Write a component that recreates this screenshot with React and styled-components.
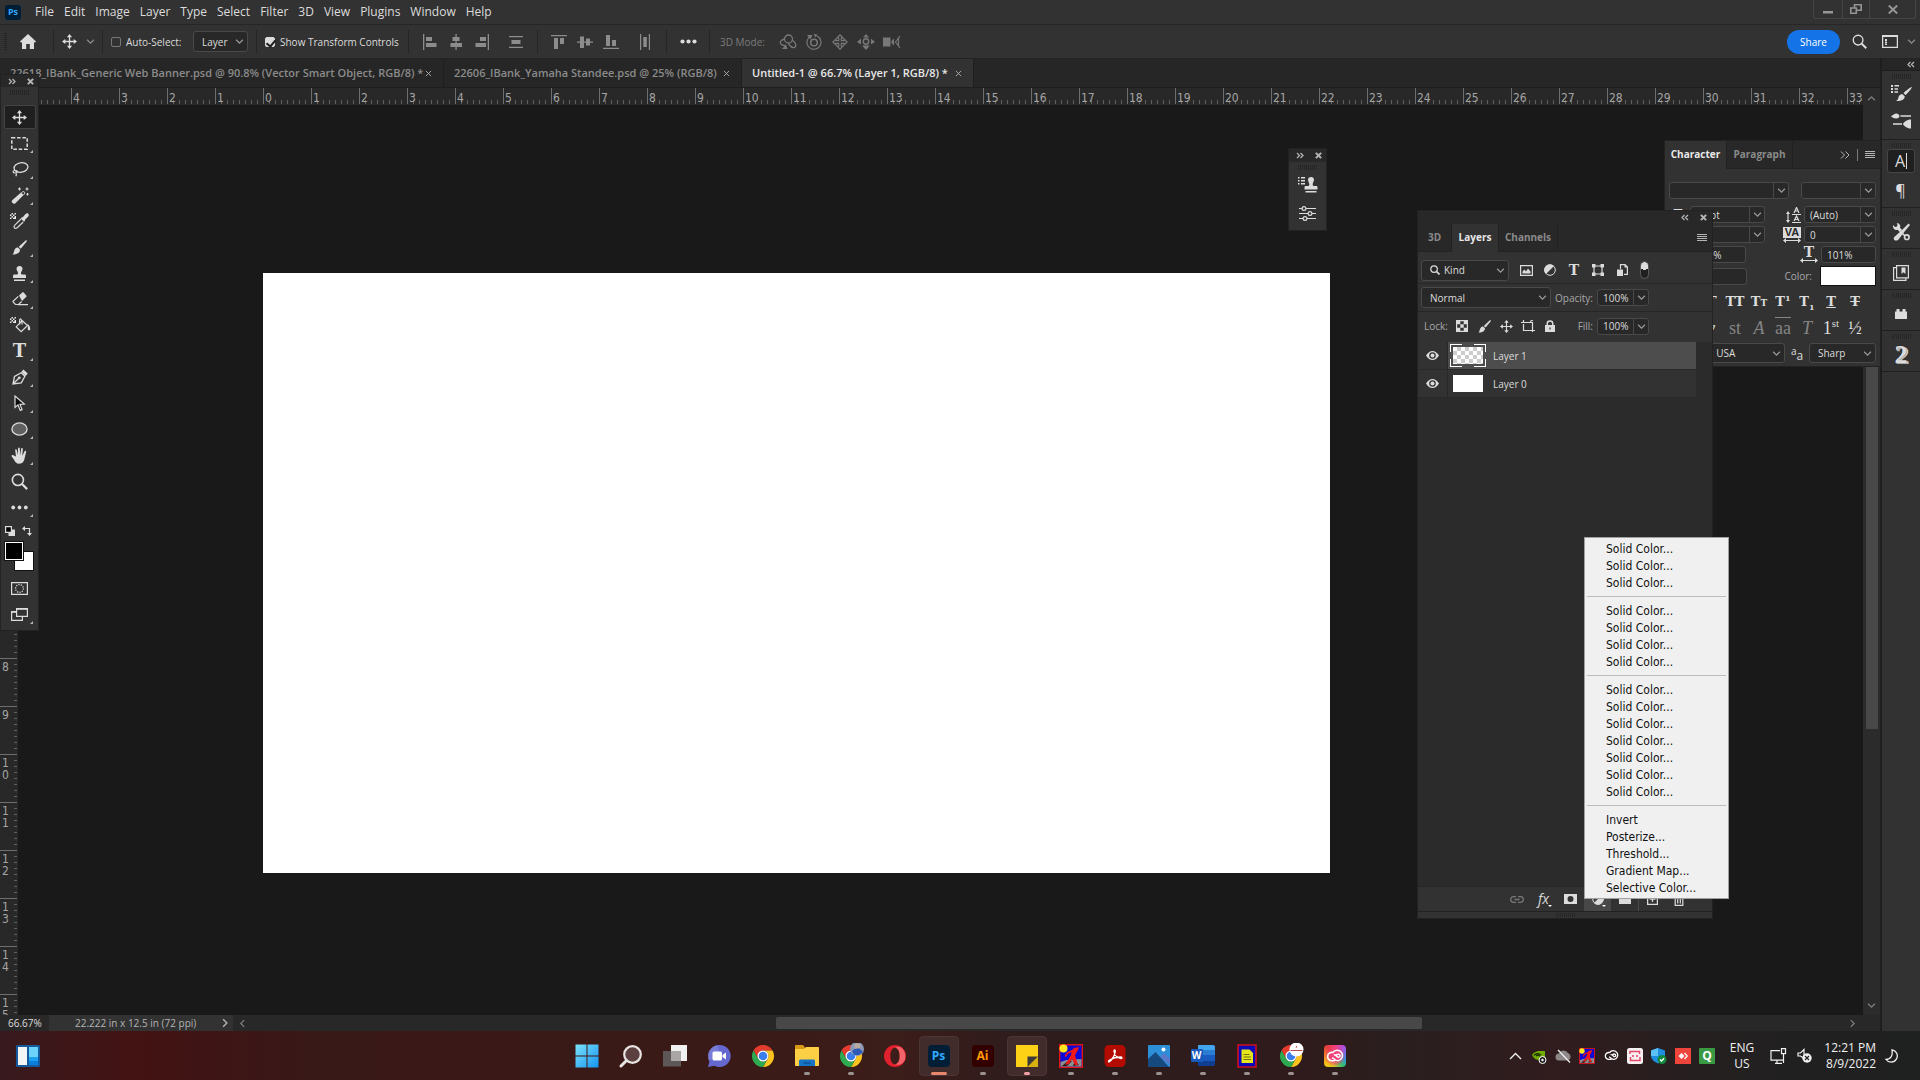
import React, { memo } from 'react'
import styled, { createGlobalStyle, css } from 'styled-components'

/* ---------- styles ---------- */

const GlobalStyle = createGlobalStyle`
  * { box-sizing: border-box; }
  body {
    margin: 0;
    background: #191919;
    color: #dcdcdc;
    font: 10px/14px 'Open Sans', 'Noto Sans', sans-serif;
    overflow: hidden;
  }
  button, input, select {
    margin: 0;
    padding: 0;
    border: 0;
    background: none;
    color: inherit;
    font: inherit;
    border-radius: 0;
  }
  svg { display: block; flex: none; }
`

const center = css`
  display: flex;
  align-items: center;
  justify-content: center;
`

const panel = css`
  position: absolute;
  display: flex;
  flex-direction: column;
  border: 1px solid #222;
  background: #323232;
`

const Page = styled.div`
  display: flex;
  flex-direction: column;
  height: 100vh;
`

const Spacer = styled.div`
  flex: 1;
`

const Gap = styled.div`
  flex: none;
  width: ${p => p.$w}px;
`

const IconButton = styled.button`
  ${center}
  color: #b4b4b4;
`

const Glyph = styled.span`
  font: bold ${p => p.$size}px/1 'DejaVu Serif', serif;
`

const MenuBarWrapper = styled.header`
  display: flex;
  align-items: center;
  height: 25px;
  padding: 0 4px 0 5px;
  background: #323232;
  border-bottom: 1px solid #262626;
  nav {
    display: flex;
    margin-left: 9px;
  }
`

const PsMark = styled.div`
  ${center}
  width: 16px;
  height: 15px;
  border-radius: 3px;
  background: #001e36;
  color: #31a8ff;
  font-size: 9px;
  font-weight: 700;
`

const MenuButton = styled.button`
  padding: 0 5px;
  font-size: 12px;
  line-height: 24px;
`

const WindowButtons = styled.div`
  display: flex;
  align-self: flex-start;
  height: 19px;
  margin-left: auto;
  border: 1px solid #454545;
  border-top: 0;
  border-radius: 0 0 3px 3px;
`

const WindowButton = styled.button`
  ${center}
  width: ${p => p.$w}px;
  color: #959595;
  & + & {
    border-left: 1px solid #454545;
  }
`

const OptionsWrapper = styled.div`
  display: flex;
  align-items: center;
  height: 34px;
  background: #323232;
  border-bottom: 1px solid #232323;
`

const SideGrip = styled.div`
  width: 3px;
  height: 18px;
  margin-left: 4px;
  background: repeating-linear-gradient(#242424 0 1px, transparent 1px 2px);
`

const Divider = styled.div`
  width: 1px;
  height: 24px;
  margin-left: ${p => p.$left || 0}px;
  background: #262626;
`

const OptButton = styled.button`
  ${center}
  flex: none;
  width: ${p => p.$w}px;
  height: 24px;
  color: ${p => (p.$bright ? '#dcdcdc' : p.$dim ? '#787878' : '#8c8c8c')};
`

const Check = styled.label`
  display: flex;
  align-items: center;
  gap: 5px;
  width: ${p => p.$w}px;
  padding-left: 8px;
  white-space: nowrap;
  input {
    appearance: none;
    width: 10px;
    height: 10px;
    border: 1px solid #777;
    border-radius: 2px;
  }
  input:checked {
    border-color: #dcdcdc;
    background: #dcdcdc;
  }
  input:checked::after {
    content: '';
    display: block;
    width: 4px;
    height: 7px;
    margin-left: 2px;
    border: solid #222;
    border-width: 0 2px 2px 0;
    transform: rotate(40deg);
  }
`

const Field = styled.div`
  display: flex;
  align-items: center;
  flex: none;
  width: ${p => p.$w}px;
  height: ${p => p.$h}px;
  border: 1px solid #494949;
  border-radius: 3px;
  background: #282828;
  select {
    appearance: none;
    flex: 1;
    min-width: 0;
    height: 100%;
    padding-left: 8px;
    outline: 0;
  }
  input {
    flex: 1;
    min-width: 0;
    height: 100%;
    padding-left: 5px;
    outline: 0;
  }
`

const Arrow = styled.span`
  ${center}
  flex: none;
  width: 15px;
  height: 100%;
  color: #9a9a9a;
  border-left: ${p => (p.$split ? '1px solid #494949' : 0)};
`

const KindIcon = styled.span`
  padding-left: 8px;
  & + select {
    padding-left: 4px;
  }
`

const ModeLabel = styled.span`
  width: 65px;
  padding-left: 10px;
  color: #7c7c7c;
`

const Share = styled.button`
  width: 53px;
  height: 24px;
  border-radius: 12px;
  background: #1473e6;
  color: #fff;
`

const Workspace = styled.main`
  position: relative;
  display: flex;
  flex: 1;
  min-height: 0;
`

const DocumentColumn = styled.section`
  display: flex;
  flex-direction: column;
  flex: 1;
  min-width: 0;
  border-right: 1px solid #1e1e1e;
`

const DocTabs = styled.div`
  display: flex;
  flex: none;
  height: 29px;
  background: #262626;
  border-bottom: 1px solid #1e1e1e;
`

const DocTab = styled.div`
  display: flex;
  align-items: center;
  justify-content: space-between;
  width: ${p => p.$w}px;
  padding: 0 11px 0 10px;
  border-right: 1px solid #1f1f1f;
  background: ${p => (p.$active ? '#323232' : '#262626')};
  color: ${p => (p.$active ? '#e8e8e8' : '#8b8b8b')};
  font-size: 11px;
  font-weight: 600;
  white-space: nowrap;
`

const DocGrid = styled.div`
  display: grid;
  grid-template: 17px 1fr / 1fr 17px;
  flex: 1;
  min-height: 0;
`

const TopRuler = styled.div`
  display: flex;
  overflow: hidden;
  padding-left: 23px;
  background: #282828;
`

const TopMark = styled.div`
  flex: none;
  width: 48px;
  height: 16px;
  padding-left: 1px;
  border-left: 1px solid #6e6e6e;
  background: repeating-linear-gradient(to right, transparent 0 5px, #5f5f5f 5px 6px) 0 100% / 46px 4px no-repeat;
  color: #a4a4a4;
  font: 12px/20px 'DejaVu Sans Condensed', 'DejaVu Sans', sans-serif;
`

const VScroll = styled.div`
  display: flex;
  flex-direction: column;
  align-items: center;
  grid-row: 1 / 3;
  grid-column: 2;
  padding: 6px 0 5px;
  background: #2b2b2b;
  color: #808080;
  svg:last-child {
    margin-top: auto;
  }
`

const VThumb = styled.div`
  width: 12px;
  height: 589px;
  margin-top: 37px;
  background: #484848;
`

const Stage = styled.div`
  display: flex;
  min-height: 0;
  overflow: hidden;
  background: #191919;
`

const SideRuler = styled.div`
  flex: none;
  width: 18px;
  padding-top: 25px;
  background: #282828;
`

const SideMark = styled.div`
  display: flex;
  flex-direction: column;
  width: 17px;
  height: 48px;
  padding: 2px 0 0 2px;
  border-top: 1px solid #6e6e6e;
  background: repeating-linear-gradient(transparent 0 5px, #5f5f5f 5px 6px) 100% 0 / 3px 46px no-repeat;
  color: #a4a4a4;
  font: 12px/12px 'DejaVu Sans Condensed', 'DejaVu Sans', sans-serif;
`

const Artboard = styled.div`
  flex: none;
  width: 1067px;
  height: 600px;
  margin: 168px 0 0 245px;
  background: #fff;
`

const StatusBar = styled.footer`
  display: flex;
  flex: none;
  height: 16px;
  background: #282828;
`

const ZoomInput = styled.input`
  width: 49px;
  padding-left: 8px;
`

const DocInfo = styled.div`
  display: flex;
  align-items: center;
  justify-content: space-between;
  width: 184px;
  padding: 0 3px 0 26px;
  background: #323232;
  color: #b4b4b4;
`

const HScroll = styled.div`
  display: flex;
  align-items: center;
  flex: 1;
  padding: 0 23px 0 5px;
  color: #808080;
  svg:last-child {
    margin-left: auto;
  }
`

const HThumb = styled.div`
  width: 646px;
  height: 12px;
  margin-left: 529px;
  border-radius: 2px;
  background: #484848;
`

const DockWrapper = styled.aside`
  display: flex;
  flex-direction: column;
  width: 39px;
  border-left: 1px solid #1e1e1e;
  background: #323232;
`

const DockHead = styled.div`
  display: flex;
  justify-content: flex-end;
  height: 12px;
  padding-right: 5px;
  background: #262626;
  border-bottom: 1px solid #1e1e1e;
`

const DockGroup = styled.div`
  display: flex;
  flex-direction: column;
  align-items: center;
  padding-bottom: 1px;
  border-bottom: 1px solid #202020;
  &:nth-child(2) {
    padding-bottom: 5px;
  }
`

const Grip = styled.div`
  flex: none;
  width: 19px;
  height: ${p => (p.$flat ? 4 : 5)}px;
  margin: ${p => (p.$flat ? '0' : '3px auto 1px')};
  background: repeating-linear-gradient(to right, #262626 0 1px, transparent 1px 2px);
`

const DockButton = styled.button`
  ${center}
  flex: none;
  align-self: center;
  width: 28px;
  height: ${p => p.$h}px;
  border: ${p => (p.$on ? '1px solid #454545' : 0)};
  border-radius: 3px;
  background: ${p => (p.$on ? '#1f1f1f' : 'none')};
`

const CharA = styled.span`
  padding-right: 1px;
  border-right: ${p => (p.$caret ? '1px solid' : 0)};
  font: 16px/16px 'Open Sans', sans-serif;
`

const Big2 = styled.span`
  font: bold 26px/24px 'Liberation Serif', serif;
  text-shadow: 1px 1px 0 #aaa, 2px 1px 0 #dcdcdc;
`

const PanelHead = styled.div`
  display: flex;
  align-items: center;
  justify-content: ${p => (p.$right ? 'flex-end' : 'space-between')};
  gap: 11px;
  flex: none;
  height: ${p => p.$h}px;
  padding: 0 5px 0 7px;
  background: #282828;
`

const ToolboxWrapper = styled.aside`
  ${panel}
  left: 0;
  top: 15px;
  width: 39px;
  padding-bottom: 2px;
`

const ToolList = styled.div`
  display: flex;
  flex-direction: column;
  gap: 2px;
  margin-top: 9px;
`

const Tool = styled.button`
  ${center}
  position: relative;
  align-self: center;
  width: 32px;
  height: 24px;
  border: 1px solid ${p => (p.$active ? '#434343' : 'transparent')};
  border-radius: 2px;
  background: ${p => (p.$active ? '#1f1f1f' : 'none')};
  &::after {
    content: ${p => (p.$corner ? "''" : 'none')};
    position: absolute;
    right: 2px;
    bottom: 1px;
    border: solid transparent;
    border-width: 0 0 3px 3px;
    border-bottom-color: #b8b8b8;
  }
`

const SwapRow = styled.div`
  display: flex;
  justify-content: space-between;
  padding: 7px 6px 5px 4px;
`

const Swatches = styled.div`
  position: relative;
  height: 31px;
  margin-bottom: 4px;
  & ~ button {
    margin-bottom: 2px;
  }
`

const Swatch = styled.button`
  position: absolute;
  left: ${p => (p.$back ? 13 : 3)}px;
  top: ${p => (p.$back ? 10 : 0)}px;
  width: 20px;
  height: 20px;
  border: 1px solid #111;
  background: ${p => p.$color};
  box-shadow: ${p => (p.$back ? 'none' : 'inset 0 0 0 1px #fff')};
`

const MiniPanel = styled.aside`
  ${panel}
  right: 593px;
  top: 89px;
  width: 39px;
  padding-bottom: 3px;
`

const CharacterWrapper = styled.aside`
  ${panel}
  right: 39px;
  top: 81px;
  width: 217px;
`

const PanelTabs = styled.div`
  display: flex;
  align-items: center;
  flex: none;
  height: 28px;
  padding-right: 5px;
  background: #282828;
  border-bottom: 1px solid #232323;
`

const PanelTab = styled.button`
  width: ${p => p.$w}px;
  height: 28px;
  padding-bottom: 2px;
  border-right: 1px solid #222;
  background: ${p => (p.$active ? '#323232' : 'none')};
  color: ${p => (p.$active ? '#e8e8e8' : '#8b8b8b')};
  font-weight: 700;
`

const ThinBar = styled.div`
  width: 1px;
  height: 12px;
  margin: 0 7px;
  background: #777;
`

const CharacterBody = styled.div`
  padding: 13px 4px 0;
`

const CharRow = styled.div`
  display: flex;
  align-items: center;
  justify-content: space-between;
  min-height: 17px;
  margin-bottom: ${p => p.$gap || 3}px;
`

const CharCell = styled.div`
  display: flex;
  align-items: center;
  gap: ${p => p.$gap || 3}px;
`

const SmallT = styled.span`
  width: 18px;
  text-align: center;
  font: bold 12px/14px 'DejaVu Serif', serif;
`

const Tracking = styled.span`
  display: flex;
  flex-direction: column;
  align-items: center;
  width: 18px;
  b {
    width: 18px;
    background: ${p => (p.$plain ? 'none' : '#dcdcdc')};
    color: ${p => (p.$plain ? '#dcdcdc' : '#282828')};
    text-align: center;
    font: ${p => (p.$plain ? "bold 14px/12px 'DejaVu Serif', serif" : "bold 11px/11px 'Liberation Sans', sans-serif")};
  }
`

const Muted = styled.span`
  color: #a8a8a8;
`

const ColorWell = styled.button`
  width: 56px;
  height: 20px;
  border: 1px solid #111;
  background: #fff;
`

const GlyphRow = styled.div`
  display: flex;
  height: 27px;
  padding-left: 6px;
`

const GlyphButton = styled.button`
  flex: none;
  width: 24px;
  height: 25px;
  line-height: 25px;
  color: ${p => (p.$dim ? '#858585' : '#dcdcdc')};
  font-family: ${p => (p.$light ? "'Liberation Serif'" : "'DejaVu Serif'")}, serif;
  font-size: ${p => (p.$light ? 18 : 13)}px;
  font-weight: ${p => (p.$light ? 400 : 700)};
  white-space: nowrap;
  small {
    font-size: 9px;
  }
  sup, sub {
    font-size: ${p => (p.$light ? 11 : 8)}px;
    line-height: 0;
  }
`

const Over = styled.span`
  border-top: 1px solid;
`

const AntiAlias = styled.span`
  font-size: 12px;
`

const LayersWrapper = styled.aside`
  ${panel}
  right: 207px;
  top: 151px;
  bottom: 112px;
  width: 296px;
  background: #2b2b2b;
`

const LayerRowBar = styled.div`
  display: flex;
  align-items: center;
  flex: none;
  height: ${p => p.$h}px;
  padding: ${p => p.$pad || '0 3px'};
  background: #323232;
  border-bottom: ${p => (p.$last ? 0 : '1px solid #262626')};
`

const BarIcon = styled.button`
  ${center}
  width: 24px;
  height: 20px;
`

const FilterSwitch = styled.label`
  display: flex;
  margin-left: 6px;
  input {
    appearance: none;
    width: 9px;
    height: 18px;
    border: 1px solid #5a5a5a;
    border-radius: 5px;
    background: radial-gradient(circle at 50% 4px, #dcdcdc 4px, #1f1f1f 4px);
  }
`

const PercentLabel = styled.span`
  width: ${p => p.$w}px;
  padding-right: 4px;
  color: #a8a8a8;
  text-align: right;
`

const LockLabel = styled.span`
  width: 30px;
  padding-left: 3px;
  color: #a8a8a8;
`

const LockIcon = styled.button`
  ${center}
  width: 22px;
  height: 20px;
`

const LayerList = styled.div`
  flex: 1;
`

const LayerItem = styled.div`
  display: flex;
  height: 28px;
  margin-right: 16px;
  background: #323232;
`

const EyeButton = styled.button`
  ${center}
  width: 30px;
  border-right: 1px solid #282828;
  border-bottom: 1px solid #2a2a2a;
`

const LayerMain = styled.div`
  display: flex;
  align-items: center;
  flex: 1;
  gap: 7px;
  padding-left: 2px;
  background: ${p => (p.$active ? '#4d4d4d' : '#323232')};
  border-bottom: 1px solid #2a2a2a;
`

const ThumbFrame = styled.div`
  ${center}
  width: 36px;
  height: 23px;
  background: ${p => p.$active
    ? `linear-gradient(#fff, #fff) 0 0 / 12px 1px no-repeat, linear-gradient(#fff, #fff) 100% 0 / 12px 1px no-repeat,
    linear-gradient(#fff, #fff) 0 100% / 12px 1px no-repeat, linear-gradient(#fff, #fff) 100% 100% / 12px 1px no-repeat,
    linear-gradient(#fff, #fff) 0 0 / 1px 8px no-repeat, linear-gradient(#fff, #fff) 100% 0 / 1px 8px no-repeat,
    linear-gradient(#fff, #fff) 0 100% / 1px 8px no-repeat, linear-gradient(#fff, #fff) 100% 100% / 1px 8px no-repeat`
    : 'none'};
`

const Thumb = styled.div`
  width: 30px;
  height: 17px;
  background: ${p => (p.$clear ? 'repeating-conic-gradient(#ccc 0 25%, #fff 0 50%) 0 0 / 8px 8px' : '#fff')};
`

const LayersFooter = styled.div`
  display: flex;
  flex: none;
  height: 25px;
  padding-left: 85px;
  background: #323232;
  border-top: 1px solid #262626;
`

const FootButton = styled.button`
  ${center}
  position: relative;
  width: 27px;
  color: ${p => (p.$dim ? '#777' : '#dcdcdc')};
  background: ${p => (p.$on ? '#484848' : 'none')};
  border-left: ${p => (p.$bar ? '1px solid #4a4a4a' : 0)};
  &::after {
    content: ${p => (p.$drop ? "''" : 'none')};
    position: absolute;
    right: 5px;
    bottom: 4px;
    border: solid transparent;
    border-width: 2px 2px 0;
    border-top-color: #fff;
  }
`

const Fx = styled.i`
  font: italic 14px/14px 'Open Sans', sans-serif;
`

const ResizeStrip = styled.div`
  ${center}
  flex: none;
  height: 7px;
  background: #323232;
  border-top: 1px solid #222;
`

const AdjustMenu = styled.div`
  position: absolute;
  left: 166px;
  bottom: 19px;
  width: 145px;
  padding: 3px 2px 1px;
  border: 1px solid #a0a0a0;
  background: #f0f0f0;
  color: #111;
`

const AdjustGroup = styled.div`
  display: flex;
  flex-direction: column;
  & + & {
    margin-top: 4px;
    padding-top: 6px;
    border-top: 1px solid #bdbdbd;
  }
`

const AdjustItem = styled.button`
  height: 17px;
  padding-left: 19px;
  text-align: left;
  font: 12px/17px 'DejaVu Sans Condensed', 'DejaVu Sans', sans-serif;
`

const TaskbarWrapper = styled.footer`
  display: grid;
  grid-template-columns: 1fr auto 1fr;
  align-items: center;
  flex: none;
  height: 49px;
  background: linear-gradient(to right, #381a1e, #431212 7%, #391818 16%, #3a1a16 38%, #3b1d1a 47%, #2e1c1c 53%, #2f1b1b 68%, #2a1f1f 73%, #311c1e 81%, #222020 91%, #1f2020);
`

const Widgets = styled.button`
  ${center}
  justify-self: start;
  width: 40px;
  height: 40px;
  margin-left: 8px;
`

const AppList = styled.div`
  display: flex;
  gap: 4px;
  padding-left: 1px;
`

const AppButton = styled.button`
  ${center}
  position: relative;
  width: 40px;
  height: 40px;
  border: 1px solid ${p => (p.$active ? '#4b3535' : 'transparent')};
  border-radius: 4px;
  background: ${p => (p.$active ? '#412b2b' : 'none')};
`

const Running = styled.span`
  position: absolute;
  bottom: 0;
  width: ${p => (p.$active ? 16 : 6)}px;
  height: 3px;
  border-radius: 2px;
  background: ${p => (p.$active ? '#e9866e' : p.$alert ? '#f2a0a8' : '#9c9292')};
`

const AdobeTile = styled.span`
  ${center}
  width: 22px;
  height: 22px;
  border-radius: 4px;
  background: ${p => p.$bg || '#001e36'};
  color: ${p => p.$color || '#31a8ff'};
  font-size: 12px;
  font-weight: 700;
`

const WordTile = styled.span`
  display: flex;
  align-items: center;
  width: 24px;
  height: 21px;
  border-radius: 2px;
  background: linear-gradient(#41a5ee 25%, #2b7cd3 25% 50%, #185abd 50% 75%, #103f91 75%) 100% 0 / 17px 21px no-repeat;
  span {
    width: 12px;
    height: 13px;
    border-radius: 1px;
    background: #185abd;
    color: #fff;
    font-weight: 700;
    line-height: 13px;
    text-align: center;
  }
`

const CloudTile = styled.span`
  ${center}
  width: 22px;
  height: 22px;
  border-radius: 4px;
  background: radial-gradient(circle, #f0417a 30%, transparent 70%),
    conic-gradient(#f0417a, #b04fe0 12%, #2f8ff0 28%, #37c36a 40%, #d8d020 52%, #f5c518 62%, #f08a24 75%, #e53d3d 88%, #f0417a);
`

const Tray = styled.div`
  display: flex;
  align-items: center;
  justify-content: flex-end;
  padding-right: 12px;
  color: #f0f0f0;
  font-size: 12px;
  line-height: 16px;
`

const TrayButton = styled.button`
  ${center}
  width: ${p => p.$w || 24}px;
  height: 40px;
`

const QTile = styled.span`
  ${center}
  width: 16px;
  height: 16px;
  border-radius: 1px;
  background: #3a9a44;
  color: #fff;
  font-size: 12px;
  font-weight: 700;
`

const Lang = styled.div`
  width: 46px;
  text-align: center;
`

const Clock = styled.div`
  width: 59px;
  text-align: right;
`

/* ---------- icons ---------- */

const Svg = ({ w = 16, h = w, vb, children }) => (
  <svg width={w} height={h} viewBox={vb || `0 0 ${w} ${h}`} fill='currentColor' aria-hidden='true'>
    {children}
  </svg>
)

const line = { fill: 'none', stroke: 'currentColor' }

const Chevron = ({ dir = 'down', w = 8 }) => {
  const deg = { down: 0, left: 90, up: 180, right: 270 }[dir]
  return (
    <Svg w={w} vb='0 0 8 8'>
      <path {...line} strokeWidth='1.1' d='M1 2.5l3 3 3-3' transform={`rotate(${deg} 4 4)`} />
    </Svg>
  )
}

const Double = ({ dir = 'right' }) => (
  <Svg w={8} h={7}>
    <path {...line} strokeWidth='1.3' d={dir === 'right' ? 'M1 1l2.5 2.5L1 6M4.5 1L7 3.5 4.5 6' : 'M3.5 1L1 3.5 3.5 6M7 1L4.5 3.5 7 6'} />
  </Svg>
)

const Cross = ({ bold }) => (
  <Svg w={7} vb='0 0 8 8'>
    <path {...line} strokeWidth={bold ? 2.4 : 1} d='M1 1l6 6M7 1L1 7' />
  </Svg>
)

const Lines = () => (
  <Svg w={10} h={8}>
    <path {...line} d='M0 .5h10M0 2.5h10M0 4.5h10M0 6.5h10' />
  </Svg>
)

const Move = ({ w = 15 }) => (
  <Svg w={w} vb='0 0 15 15'>
    <path {...line} strokeWidth='1.3' d='M7.5 2v11M2 7.5h11' />
    <path d='M7.5 0l2.6 3.3H4.9zM7.5 15l2.6-3.3H4.9zM0 7.5l3.3-2.6v5.2zM15 7.5l-3.3-2.6v5.2z' />
  </Svg>
)

const Brush = ({ w = 16 }) => (
  <Svg w={w} vb='0 0 16 16'>
    <path d='M15.6.4c.4.3.2.9-.1 1.4L9.3 9.2 7.2 7.3 14.2.7c.5-.4 1-.6 1.4-.3zM6.4 8l2.1 2c.4 2.6-2.3 5.6-8.1 5.4 2-1.6 1.3-3.4 2.5-5.4C3.7 8.6 5.2 7.9 6.4 8z' />
  </Svg>
)

const Stamp = ({ w = 15 }) => (
  <Svg w={w} vb='0 0 15 15'>
    <path d='M7.5 0a3 3 0 0 1 3 3c0 1.5-1.5 2.5-1.5 4.2 0 1.1.6 1.3 2 1.3h1.5c1 0 1.5.6 1.5 1.5V12H1v-2c0-.9.5-1.5 1.5-1.5H4c1.4 0 2-.2 2-1.3C6 5.5 4.5 4.5 4.5 3a3 3 0 0 1 3-3zM2 13.4h11V15H2z' />
  </Svg>
)

const Search = ({ w = 16, sw = 1.6 }) => (
  <Svg w={w} vb='0 0 16 16'>
    <circle {...line} strokeWidth={sw} cx='6.5' cy='6.5' r='5.2' />
    <path {...line} strokeWidth={sw + 0.6} d='M10.4 10.4l4.8 4.8' />
  </Svg>
)

const Checker = () => (
  <>
    <path d='M1 1h6v6H1z' fill='#eee' />
    <path fill='#222' d='M1 1h1.5v1.5H1zM4 1h1.5v1.5H4zM2.5 2.5H4V4H2.5zM5.5 2.5H7V4H5.5zM1 4h1.5v1.5H1zM4 4h1.5v1.5H4zM2.5 5.5H4V7H2.5z' />
  </>
)

const toolIcons = [
  ['Move', <Move key='m' />],
  ['Marquee', (
    <Svg w={17} h={13}><path {...line} strokeWidth='1.5' strokeDasharray='3.5 1.8' d='M.8.8h15.4v11.4H.8z' /></Svg>
  )],
  ['Lasso', (
    <Svg w={18} h={16}>
      <ellipse {...line} strokeWidth='1.3' cx='10' cy='6.5' rx='7' ry='4.8' transform='rotate(-10 10 6.5)' />
      <path {...line} strokeWidth='1.2' d='M4 9.5c-2.5 0-2.5 2.5 0 2.5s3-2 1-2.3M4.5 12c1.5.5.8 2.2.3 3.2' />
    </Svg>
  )],
  ['Magic wand', (
    <Svg w={18} h={17}>
      <path d='M1.2 13.2L10 5.5l2.6 2.6-8.2 8.2c-.9.8-2 .7-2.9-.2s-1-2-.3-2.9z' />
      <path {...line} strokeWidth='1' d='M10.3 5.8c1-1.2 3-1.5 3.2-.8s.3 1.7-1 3' />
      <path {...line} strokeWidth='1.1' d='M8.5.5v3M7 2h3M16 .5v3M14.5 2h3M16.5 6v2.4M15.3 7.2h2.4' />
    </Svg>
  )],
  ['Eyedropper', (
    <Svg w={21} h={18}>
      <Checker />
      <path d='M12.5 5.5l1.2-.3 2.6-3c1-1 2.2-1.2 3-.4s.7 2-.3 3l-2.8 2.7-.2 1.3-1 .9-3.4-3.3z' />
      <path {...line} strokeWidth='1.2' d='M11.8 7.3l-6 5.8c-1 .9-.8 2.2-.4 2.8s1.8.8 2.8-.2l6-5.7' />
    </Svg>
  )],
  ['Brush', <Brush key='b' w={15} />],
  ['Clone stamp', <Stamp key='s' />],
  ['Eraser', (
    <Svg w={16} h={14}>
      <path d='M7 3.6L10.3.6c.4-.4 1-.4 1.4 0l2.6 2.8c.4.4.4 1 0 1.4L10 9z' />
      <path {...line} strokeWidth='1.2' d='M6.3 4.4L1.4 9c-.4.4-.4.9 0 1.3l2.2 2.2h3l3-3M6 12.7h10' />
    </Svg>
  )],
  ['Paint bucket', (
    <Svg w={22} h={18}>
      <Checker />
      <path {...line} strokeWidth='1.2' d='M12.5 4l6 5.5-6.3 6.2-5-4.8 6-6.5M11 8.5c-.5-3-1-5 .2-5.5s1.8 3 2 5.5' />
      <path d='M18 8c2.5.8 3.5 3 3.2 6-1.5.8-2.8 0-2.4-1.8.2-1.4.2-2.6-.8-4.2z' />
    </Svg>
  )],
  ['Type', <Glyph key='t' $size={18}>T</Glyph>],
  ['Pen', (
    <Svg w={16}>
      <path {...line} strokeWidth='1.3' d='M1 15l1.5-7.5L9.3 3.7l3.6 3.5-3.6 6.6zM1 15l5.8-5.8' />
      <circle cx='7.3' cy='8.8' r='1.4' />
      <path d='M9.4 2.8L11.5.6l4.2 4-2 2.3z' />
    </Svg>
  )],
  ['Path selection', (
    <Svg w={12} h={17}><path d='M1 1v11.5l3-2.6 2.3 5.5 1.8-.8-2.2-5.3 4.4-.3z' fill='#0c0c0c' stroke='#dcdcdc' strokeWidth='1.2' /></Svg>
  )],
  ['Ellipse', (
    <Svg w={17} h={14}><ellipse cx='8.5' cy='7' rx='7.6' ry='6.1' fill='#606060' stroke='#dcdcdc' strokeWidth='1.3' /></Svg>
  )],
  ['Hand', (
    <Svg w={17}>
      <path d='M5 9.5L4.2 3.3C4 2 5.5 1.7 5.8 3l1 4.8h.1L7 1.5C7 .2 8.7.2 8.8 1.5l.3 6.2h.2l.8-5.9c.2-1.2 1.8-1 1.7.3l-.4 6.3.2.1 1.9-4.2c.5-1.2 2-.6 1.6.6L13.7 11c-.6 3-1.8 5.7-5.5 5.7-3 0-4-1.8-5-3.7L.7 9.500c-.7-1 .6-2.1 1.7-1.2z' />
    </Svg>
  )],
  ['Zoom', <Search key='z' w={17} sw={1.5} />],
  ['More tools', (
    <Svg w={17} h={5}><circle cx='2.2' cy='2.5' r='1.9' /><circle cx='8.5' cy='2.5' r='1.9' /><circle cx='14.8' cy='2.5' r='1.9' /></Svg>
  )],
]

const noCorner = ['Move', 'Eyedropper', 'Paint bucket', 'Zoom']

const AlignIcon = ({ d }) => <Svg w={16}><path d={d} /></Svg>

const aligns = [
  ['Align left edges', 'M1 0h1.3v16H1zM4 3h6v4H4zM4 9h10.5v4H4z'],
  ['Align horizontal centers', 'M7.4 0h1.3v16H7.4zM4.5 3h7v4h-7zM2.5 9h11.5v4H2.5z'],
  ['Align right edges', 'M13.7 0H15v16h-1.3zM6 3h6v4H6zM1.5 9H12v4H1.5z'],
]

const vAligns = [
  ['Align top edges', 'M0 1h16v1.3H0zM3 4h4v11H3zM9 4h4v6H9z'],
  ['Align vertical centers', 'M0 7.4h16v1.3H0zM3 2.5h4v11.5H3zM9 4.5h4v7H9z'],
  ['Align bottom edges', 'M0 13.7h16V15H0zM3 1h4v11H3zM9 6h4v6H9z'],
]

const modes = [
  ['Orbit', (
    <Svg w={18} h={16}>
      <circle {...line} strokeWidth='1.3' cx='9.5' cy='5' r='4' />
      <path {...line} strokeWidth='1.3' d='M5.5 5C1 6 0 9 3 11l4 1M13 6c3 2 5 5 3 7-1 1-3 .5-4.500-.5M9.500 9c0 2 1.500 3 4 4' />
      <path d='M3 15h5.5L7 10.5z' />
    </Svg>
  )],
  ['Roll', (
    <Svg w={16}>
      <circle {...line} strokeWidth='1.5' cx='8' cy='8.5' r='3.3' />
      <path {...line} strokeWidth='1.2' d='M4 2.5A7 7 0 1 0 11 2' />
      <path d='M1 1h5.5L4.5 5.5zM7.5 0l4 .5-2 3z' />
    </Svg>
  )],
  ['Pan', (
    <Svg w={16}>
      <path {...line} strokeWidth='1.2' d='M6.7 6.7V4H5l3-3.2L11 4H9.3v2.7H12V5l3.2 3L12 11V9.3H9.3V12H11l-3 3.2L5 12h1.7V9.3H4V11L.8 8 4 5v1.7z' />
    </Svg>
  )],
  ['Slide', (
    <Svg w={18} h={16}>
      <circle {...line} strokeWidth='1.5' cx='9' cy='7.5' r='2.7' />
      <path d='M9 0l3 3.5H6zM9 16l4-4.500H5zM0 8l4-3.500v6zM18 8l-4-3.500v6z' />
    </Svg>
  )],
  ['Zoom camera', (
    <Svg w={18} h={14}>
      <path d='M0 2.5h7.5v9H0zM8.5 6L11 3.5v7L8.5 8z' />
      <path {...line} strokeWidth='1.2' d='M17 1l-4.5 6L17 13M15.5 3.5v7' />
    </Svg>
  )],
]

/* ---------- taskbar pictures ---------- */

const Chrome = ({ badge }) => (
  <Svg w={26}>
    <g transform='translate(1 1)'>
      <path fill='#e33b2e' d='M12 1a11 11 0 0 1 9.53 5.5H12a5.5 5.5 0 0 0-4.76 2.75v5.5L2.47 6.5A11 11 0 0 1 12 1z' />
      <path fill='#fcc31e' d='M12 6.5h9.53A11 11 0 0 1 12 23l4.76-8.25A5.5 5.5 0 0 0 12 6.5z' />
      <path fill='#2da94f' d='M2.47 6.5l4.77 8.25a5.5 5.5 0 0 0 9.52 0L12 23A11 11 0 0 1 2.47 6.5z' />
      <circle cx='12' cy='12' r='5.5' fill='#fff' />
      <circle cx='12' cy='12' r='4.3' fill='#3b7ded' />
    </g>
    {badge === 'photo' && (
      <>
        <circle cx='19' cy='6' r='7' fill='#8b98b8' />
        <path d='M14 8l5-4 4 3 2 2-4 3h-5z' fill='#2f59b8' />
        <path d='M16 2l3-2 4 2-1 3-5 1z' fill='#b9aaa0' />
      </>
    )}
    {badge === 'logo' && (
      <>
        <circle cx='18.5' cy='6.5' r='7' fill='#fff' />
        <path d='M12.5 7.5h12' stroke='#c04848' strokeWidth='1' />
        <path d='M17.500 4.500l1-2 1 2z' fill='#c04848' />
      </>
    )}
  </Svg>
)

const RunnerIcon = ({ w = 24 }) => (
  <Svg w={w} vb='0 0 24 24'>
    <path d='M.7.7h22.6v22.6H.7z' fill='#0c08d8' stroke='#e01414' strokeWidth='1.4' />
    <path d='M1.500 18l6-2 15-1v7.500h-21z' fill='#8d8d8d' />
    <path d='M3 22l6-5h4l-5 5zM14 22l2-5 4 4z' fill='#1a1a1a' />
    <circle cx='4.5' cy='4.5' r='4' fill='#ffe81c' />
    <path d='M13 6l2-2 5-1-1 3-3 5 1 4 2 6h-3l-3-6-3 5-4 1 3-5 3-5 .5-3-3.500 2-2 3-1.500-1 3-4z' fill='#f01818' />
  </Svg>
)

const Loops = ({ w = 16 }) => (
  <Svg w={w} vb='0 0 16 16'>
    <g fill='none' stroke='#fff' strokeWidth='1.4'>
      <path d='M8 12.200H5.200a3.700 3.700 0 1 1 .8-7.300A4.700 4.700 0 1 1 10.500 12.200C8 12.200 7 9.800 5.300 9.500' />
      <path d='M7 7.200c1.200-.6 2 .3 2.700 1.200.8 1 2.600 1 2.800-.4.200-1.500-2-2.300-3.300-.8' />
    </g>
  </Svg>
)

const apps = [
  { name: 'Start', icon: (
    <Svg w={24}>
      <defs>
        <linearGradient id='win' x1='0' y1='0' x2='1' y2='1'><stop offset='0' stopColor='#7be3fb' /><stop offset='1' stopColor='#1592ef' /></linearGradient>
      </defs>
      <path fill='url(#win)' d='M.5.5h11v11H.5zM12.5.5h11v11h-11zM.5 12.5h11v11H.5zM12.5 12.5h11v11h-11z' />
    </Svg>
  ) },
  { name: 'Search', icon: (
    <Svg w={24}>
      <circle cx='13.5' cy='10.5' r='8.3' fill='#5c403f' stroke='#e8e4e4' strokeWidth='2.2' />
      <path d='M7.5 16.5L2 22' stroke='#e8e4e4' strokeWidth='3' strokeLinecap='round' />
    </Svg>
  ) },
  { name: 'Task view', icon: (
    <Svg w={24}>
      <path d='M8 1h16v16H8z' fill='#f1f1f1' />
      <path d='M0 7h18v15.5H0z' fill='#5d5857' />
      <path d='M8 7h10v10H8z' fill='#a9a6a5' />
    </Svg>
  ) },
  { name: 'Chat', icon: (
    <Svg w={24}>
      <path d='M12.5 1a11 11 0 1 1-5 20.7L1 23l1.5-6A11 11 0 0 1 12.5 1z' fill='#6468cf' />
      <path d='M2 17a11 11 0 0 1 8-15.8c3 3 2 9-1 12z' fill='#8b8fe0' opacity='.5' />
      <rect x='5.5' y='7.5' width='9.5' height='9' rx='1.5' fill='#fff' />
      <path d='M15.5 11l3.5-2.5v7l-3.5-2.5z' fill='#fff' />
    </Svg>
  ) },
  { name: 'Chrome', icon: <Chrome /> },
  { name: 'File Explorer', open: true, icon: (
    <Svg w={24}>
      <path d='M0 2c0-.6.5-1 1-1h7l2 2.5V7H0z' fill='#d79a17' />
      <path d='M0 5h9l2-2h12c.6 0 1 .4 1 1v17c0 .6-.4 1-1 1H1c-.6 0-1-.4-1-1z' fill='#fccf45' />
      <path d='M4 22v-5c0-1 .8-1.5 1.5-1.5h13c.8 0 1.500.6 1.500 1.5v5z' fill='#1673c4' />
      <path d='M8.5 19h7' stroke='#0b5397' strokeWidth='1.5' />
    </Svg>
  ) },
  { name: 'Chrome profile', open: true, icon: <Chrome badge='photo' /> },
  { name: 'Opera', icon: (
    <Svg w={24}>
      <path fillRule='evenodd' fill='#e0202c' d='M12 1a11 11 0 1 1 0 22 11 11 0 0 1 0-22zm0 2.8c-3 0-4.7 3.8-4.7 8.2s1.7 8.2 4.7 8.2 4.7-3.8 4.7-8.2S15 3.8 12 3.8z' />
      <path fill='#f2636a' d='M12 3.8c3 0 4.7 3.8 4.7 8.2s-1.7 8.2-4.7 8.2c4 2 9-1 10-5a12 12 0 0 0-3-11c-2-2-5-2-7-.4z' />
    </Svg>
  ) },
  { name: 'Photoshop', open: true, active: true, icon: <AdobeTile>Ps</AdobeTile> },
  { name: 'Illustrator', open: true, icon: <AdobeTile $bg='#330000' $color='#ff9a00'>Ai</AdobeTile> },
  { name: 'Sticky Notes', open: true, alert: true, icon: (
    <Svg w={24}>
      <path d='M1 1h22v11.5L12.5 23H1z' fill='#fcd116' />
      <path d='M12.5 12.5H23L12.5 23z' fill='#3b3a39' />
      <path d='M23 12.5V23H12.5z' fill='#d9b00f' />
    </Svg>
  ) },
  { name: 'Runner', open: true, icon: <RunnerIcon /> },
  { name: 'Acrobat', open: true, icon: (
    <Svg w={24}>
      <rect x='1.5' y='1' width='21' height='22' rx='4.5' fill='#b30b00' />
      <path d='M6 18c3-2 6-7 6.3-10.5.1-2-1.6-2-1.3 0 .5 3.5 3.5 6.5 7 7 1.5 0 1.2-1.5-.5-1.5-3.5 0-8 1.2-11 3-1 .9-1.500 1.900-.5 2z' fill='none' stroke='#fff' strokeWidth='1.3' />
    </Svg>
  ) },
  { name: 'Photos', open: true, icon: (
    <Svg w={24}>
      <rect x='1' y='1' width='22' height='22' rx='1' fill='#2c8fd8' />
      <path d='M13 13l4-4 6 6v6z' fill='#5a77c8' />
      <path d='M1 15l7.5-7L22 23H2c-.6 0-1-.4-1-1z' fill='#164a7e' />
      <circle cx='16.5' cy='5.5' r='2' fill='#fff' />
    </Svg>
  ) },
  { name: 'Word', open: true, icon: <WordTile><span>W</span></WordTile> },
  { name: 'Notes', open: true, icon: (
    <Svg w={24}>
      <path d='M3 1h18v22H3z' fill='#0d0bb8' stroke='#d0101c' strokeWidth='1.6' />
      <path d='M6.5 5.5h8L18 9v10H6.5z' fill='#e5e61c' />
      <path d='M8.5 10.5h6M8.5 13h7.5M8.5 15.5h7.5' stroke='#74750f' />
    </Svg>
  ) },
  { name: 'Chrome work', open: true, icon: <Chrome badge='logo' /> },
  { name: 'Creative Cloud', open: true, icon: <CloudTile><Loops w={18} /></CloudTile> },
]

const tray = [
  ['NVIDIA', (
    <Svg w={16}>
      <path d='M1 7c2-3 5-4 7-4h6v9H8c-4 0-6-3-7-5z' fill='#6fae00' />
      <path d='M3 7.5c2-2.5 5-2.5 7-.5M5 8c1.5-1.5 3-1 4 .5' stroke='#1c2a06' fill='none' strokeWidth='1.2' />
      <circle cx='11.5' cy='12' r='3.5' fill='#222' stroke='#fff' />
      <circle cx='11.5' cy='12' r='1.2' fill='#fff' />
    </Svg>
  )],
  ['OneDrive', (
    <Svg w={17} h={16}>
      <path d='M4 12.5a3.5 3.5 0 0 1 0-7 5 5 0 0 1 9-.5 4 4 0 0 1 0 7.5z' fill='#8d8787' />
      <path d='M3 2l12 12.5' stroke='#eee' strokeWidth='1.3' />
    </Svg>
  )],
  ['Runner', <RunnerIcon key='r' w={16} />],
  ['Creative Cloud', <Loops key='cc' w={15} />],
  ['Recorder', (
    <Svg w={16}>
      <rect width='16' height='16' rx='2.5' fill='#f7f0f2' />
      <path d='M3 6V3.5h9.5V6M13 9v3.5H3.5V9' stroke='#e6486b' strokeWidth='1.5' fill='none' />
      <path d='M6 7v2M10 7v2' stroke='#e6486b' strokeWidth='1.6' />
    </Svg>
  )],
  ['Security', (
    <Svg w={16}>
      <path d='M7 0l7 2.5v5C14 11 11 14 7 15.5 3 14 0 11 0 7.5v-5z' fill='#1f8ee0' />
      <path d='M7 0v8H0V2.5z' fill='#5cc1f5' />
      <circle cx='11' cy='11.5' r='4.5' fill='#10893e' />
      <path d='M9 11.5l1.5 1.5 2.6-2.8' stroke='#fff' fill='none' strokeWidth='1.3' />
    </Svg>
  )],
  ['AnyDesk', (
    <Svg w={16}>
      <path d='M0 0h16v16H0z' fill='#ef443b' />
      <path d='M6.5 5L9.5 8l-3 3-3-3zM9 5.5L10 4.6 13 8l-3 3.4-1-.9L11.4 8z' fill='#fff' />
    </Svg>
  )],
  ['Quick Heal', <QTile key='q'>Q</QTile>],
]

/* ---------- pieces ---------- */

const Picker = ({ label, options, width, height, icon }) => (
  <Field $w={width} $h={height}>
    {icon}
    <select aria-label={label} defaultValue={options[0]}>
      {options.map(o => <option key={o}>{o}</option>)}
    </select>
    <Arrow><Chevron w={9} /></Arrow>
  </Field>
)

const Combo = ({ label, value = '', width, height = 17, arrow = true }) => (
  <Field $w={width} $h={height}>
    <input aria-label={label} defaultValue={value} />
    {arrow && <Arrow $split><Chevron w={9} /></Arrow>}
  </Field>
)

const MenuBar = () => (
  <MenuBarWrapper>
    <PsMark>Ps</PsMark>
    <nav>
      {menus.map(m => <MenuButton key={m}>{m}</MenuButton>)}
    </nav>
    <WindowButtons>
      <WindowButton $w={28} aria-label='Minimize'><Svg w={10}><path d='M0 7h10v2.5H0z' /></Svg></WindowButton>
      <WindowButton $w={27} aria-label='Restore'>
        <Svg w={12} h={10}>
          <path {...line} strokeWidth='1.6' d='M.8 4h5.5v5.2H.8zM4.5 4V.8h6.7v5.4H6.5' />
        </Svg>
      </WindowButton>
      <WindowButton $w={46} aria-label='Close'>
        <Svg w={10} h={9}><path {...line} strokeWidth='2' d='M.8.5l8.4 8M9.2.5l-8.4 8' /></Svg>
      </WindowButton>
    </WindowButtons>
  </MenuBarWrapper>
)

const OptionsBar = () => (
  <OptionsWrapper>
    <SideGrip />
    <OptButton $w={42} $bright aria-label='Home'>
      <Svg w={16} h={15}><path d='M8 0l8 7.5-1.2 1.3-.8-.7V15H9.800v-5H6.200v5H2V8.100l-.8.7L0 7.500z' /></Svg>
    </OptButton>
    <Divider $left={4} />
    <OptButton $w={30} $bright aria-label='Move tool'><Move /></OptButton>
    <OptButton $w={12} aria-label='Tool presets'><Chevron w={9} /></OptButton>
    <Divider $left={6} />
    <Check $w={90}>
      <input type='checkbox' />
      Auto-Select:
    </Check>
    <Picker label='Auto-select target' options={['Layer', 'Group']} width={55} height={21} />
    <Divider $left={8} />
    <Check $w={151}>
      <input type='checkbox' defaultChecked />
      Show Transform Controls
    </Check>
    <Divider />
    <Gap $w={8} />
    {aligns.map(([n, d]) => <OptButton key={n} $w={26} aria-label={n}><AlignIcon d={d} /></OptButton>)}
    <OptButton $w={42} aria-label='Distribute vertically'>
      <AlignIcon d='M1 2h14v1.3H1zM3.5 6h9v4h-9zM1 12.7h14V14H1z' />
    </OptButton>
    <Divider />
    <Gap $w={8} />
    {vAligns.map(([n, d]) => <OptButton key={n} $w={26} aria-label={n}><AlignIcon d={d} /></OptButton>)}
    <OptButton $w={42} aria-label='Distribute horizontally'>
      <AlignIcon d='M3 0h1.2v16H3zM6.3 3h3.5v10H6.3zM11.8 0H13v16h-1.2z' />
    </OptButton>
    <Divider />
    <OptButton $w={42} $bright aria-label='More options'>
      <Svg w={17} h={5}><circle cx='2.5' cy='2.5' r='2.1' /><circle cx='8.5' cy='2.5' r='2.1' /><circle cx='14.5' cy='2.5' r='2.1' /></Svg>
    </OptButton>
    <Divider />
    <ModeLabel>3D Mode:</ModeLabel>
    {modes.map(([n, icon]) => <OptButton key={n} $w={26} $dim aria-label={n}>{icon}</OptButton>)}
    <Spacer />
    <Share>Share</Share>
    <OptButton $w={38} $bright aria-label='Search'><Search w={15} sw={1.4} /></OptButton>
    <OptButton $w={24} $bright aria-label='Workspace'>
      <Svg w={16} h={13}>
        <path {...line} strokeWidth='1.3' d='M.6.6h14.8v11.8H.6z' />
        <path d='M0 0h16v2H0zM3 4h2v2H3zM3 6.500h2V8H3zM3 8.500h2V10H3z' />
      </Svg>
    </OptButton>
    <OptButton $w={18} aria-label='Workspace menu'><Chevron w={9} /></OptButton>
  </OptionsWrapper>
)

const Toolbox = () => (
  <ToolboxWrapper>
    <PanelHead $h={12}>
      <IconButton aria-label='Expand'><Double /></IconButton>
      <IconButton aria-label='Close tools'><Cross bold /></IconButton>
    </PanelHead>
    <Grip />
    <ToolList>
      {toolIcons.map(([name, icon], i) => (
        <Tool key={name} $active={i === 0} $corner={!noCorner.includes(name)} aria-label={name}>
          {icon}
        </Tool>
      ))}
    </ToolList>
    <SwapRow>
      <Svg w={10}>
        <path d='M3.5 3.5H10V10H3.5z' />
        <path d='M.6.6h5.8v5.8H.6z' fill='#000' stroke='#dcdcdc' strokeWidth='1.2' />
      </Svg>
      <Svg w={10}>
        <path {...line} strokeWidth='1.2' d='M2 2.5h5.5V8' />
        <path d='M0 2.5L3 0v5zM7.5 10L5 7h5z' />
      </Svg>
    </SwapRow>
    <Swatches>
      <Swatch $color='#fff' $back aria-label='Background color' />
      <Swatch $color='#000' aria-label='Foreground color' />
    </Swatches>
    <Tool aria-label='Quick mask'>
      <Svg w={17} h={13}>
        <path {...line} strokeWidth='1.2' d='M.6.6h15.8v11.8H.6z' />
        <circle {...line} strokeWidth='1.3' strokeDasharray='1.2 1.2' cx='8.5' cy='6.5' r='3.9' />
      </Svg>
    </Tool>
    <Tool $corner aria-label='Screen mode'>
      <Svg w={17} h={13}>
        <path {...line} strokeWidth='1.2' d='M5.6.6h10.8v7.8H5.6zM5.5 3.6H.6v8.8h10.8V8.5' />
        <path d='M5 0h12v1.8H5zM0 3h5v1.8H0z' />
      </Svg>
    </Tool>
  </ToolboxWrapper>
)

const typeStyles = [
  ['Bold', 'T'],
  ['Italic', <i key='i'>T</i>],
  ['All caps', 'TT'],
  ['Small caps', <span key='sc'>T<small>T</small></span>],
  ['Superscript', <span key='sp'>T<sup>1</sup></span>],
  ['Subscript', <span key='sb'>T<sub>1</sub></span>],
  ['Underline', <u key='u'>T</u>],
  ['Strikethrough', <s key='s'>T</s>],
]

const openType = [
  ['Ligatures', 'fi', true],
  ['Contextual', <i key='c'>y</i>],
  ['Discretionary', 'st', true],
  ['Swash', <i key='a'>A</i>, true],
  ['Stylistic', <Over key='o'>aa</Over>, true],
  ['Titling', <i key='t'>T</i>, true],
  ['Ordinals', <span key='or'>1<sup>st</sup></span>],
  ['Fractions', '½'],
]

const CharacterPanel = () => (
  <CharacterWrapper>
    <PanelTabs>
      <PanelTab $active $w={62}>Character</PanelTab>
      <PanelTab $w={66}>Paragraph</PanelTab>
      <Spacer />
      <IconButton aria-label='Collapse'>
        <Svg w={10} h={8}><path {...line} d='M1 .5L4.5 4 1 7.5M5.5.5L9 4 5.5 7.5' /></Svg>
      </IconButton>
      <ThinBar />
      <IconButton aria-label='Panel menu'><Lines /></IconButton>
    </PanelTabs>
    <CharacterBody>
      <CharRow $gap={7}>
        <Combo label='Font family' width={120} />
        <Combo label='Font style' width={75} />
      </CharRow>
      <CharRow>
        <CharCell>
          <SmallT>T</SmallT>
          <Combo label='Font size' value='12 pt' width={75} />
        </CharCell>
        <CharCell>
          <Svg w={16}>
            <path {...line} strokeWidth='1.2' d='M3 6v9M7 7.500h9M7 15.500h9M9 6l2.500-5.500L14 6M9.800 4h3.500M9 14l2.500-5L14 14M9.800 12.500h3.500' />
            <path d='M3 4l2 3H1zM3 16l2-3H1z' />
          </Svg>
          <Combo label='Leading' value='(Auto)' width={72} />
        </CharCell>
      </CharRow>
      <CharRow>
        <CharCell>
          <SmallT>T</SmallT>
          <Combo label='Kerning' width={75} />
        </CharCell>
        <CharCell>
          <Tracking>
            <b>VA</b>
            <Svg w={18} h={5}><path d='M0 2.5L3 0v2h12V0l3 2.5L15 5V3H3v2z' /></Svg>
          </Tracking>
          <Combo label='Tracking' value='0' width={72} />
        </CharCell>
      </CharRow>
      <CharRow>
        <CharCell>
          <Gap $w={18} />
          <Combo label='Vertical scale' value='100%' width={56} arrow={false} />
        </CharCell>
        <CharCell>
          <Tracking $plain>
            <b>T</b>
            <Svg w={18} h={5}><path d='M0 2.5L3 0v2h12V0l3 2.5L15 5V3H3v2z' /></Svg>
          </Tracking>
          <Combo label='Horizontal scale' value='101%' width={55} arrow={false} />
        </CharCell>
      </CharRow>
      <CharRow>
        <CharCell>
          <Gap $w={18} />
          <Combo label='Baseline shift' width={57} arrow={false} />
        </CharCell>
        <CharCell $gap={8}>
          <Muted>Color:</Muted>
          <ColorWell aria-label='Text color' />
        </CharCell>
      </CharRow>
      <GlyphRow>
        {typeStyles.map(([n, g]) => <GlyphButton key={n} aria-label={n}>{g}</GlyphButton>)}
      </GlyphRow>
      <GlyphRow>
        {openType.map(([n, g, dim]) => <GlyphButton key={n} $light $dim={dim} aria-label={n}>{g}</GlyphButton>)}
      </GlyphRow>
      <CharRow>
        <Picker label='Language' options={['English: USA', 'English: UK']} width={116} height={20} />
        <AntiAlias><sup>a</sup>a</AntiAlias>
        <Picker label='Anti-aliasing' options={['Sharp', 'Crisp', 'Smooth']} width={67} height={20} />
      </CharRow>
    </CharacterBody>
  </CharacterWrapper>
)

const LayersPanel = () => (
  <LayersWrapper>
    <PanelHead $h={13} $right>
      <IconButton aria-label='Collapse'><Double dir='left' /></IconButton>
      <IconButton aria-label='Close layers'><Cross bold /></IconButton>
    </PanelHead>
    <PanelTabs>
      <PanelTab $w={34}>3D</PanelTab>
      <PanelTab $active $w={47}>Layers</PanelTab>
      <PanelTab $w={59}>Channels</PanelTab>
      <Spacer />
      <IconButton aria-label='Panel menu'><Lines /></IconButton>
    </PanelTabs>
    <LayerRowBar $h={32} $pad='5px 3px 0'>
      <Picker label='Filter type' options={['Kind', 'Name']} width={88} height={21} icon={<KindIcon><Search w={10} sw={2} /></KindIcon>} />
      <Gap $w={5} />
      <BarIcon aria-label='Pixel layers'>
        <Svg w={13} h={11}><path {...line} strokeWidth='1.2' d='M.6.6h11.8v9.8H.6z' /><path d='M2.500 8.500V6.500l2-2 1.500 2 2-3 2.500 3v2z' /></Svg>
      </BarIcon>
      <BarIcon aria-label='Adjustment layers'>
        <Svg w={12}><circle {...line} cx='6' cy='6' r='5.3' /><path d='M6 .5A5.500 5.500 0 0 0 2 10L10 2A5.500 5.500 0 0 0 6 .5z' /></Svg>
      </BarIcon>
      <BarIcon aria-label='Type layers'><Glyph $size={14}>T</Glyph></BarIcon>
      <BarIcon aria-label='Shape layers'>
        <Svg w={12}><path {...line} strokeWidth='1.2' d='M2 2h8v8H2z' /><path d='M0 0h3.500v3.500H0zM8.500 0H12v3.500H8.500zM0 8.500h3.500V12H0zM8.500 8.500H12V12H8.500z' /></Svg>
      </BarIcon>
      <BarIcon aria-label='Smart objects'>
        <Svg w={11} h={12}><path {...line} strokeWidth='1.2' d='M3.5 5V.6H8L10.4 3v7.4H7' /><path d='M0 5.500h6V12H0zM7.500 0l3.500 3.500H7.500z' /></Svg>
      </BarIcon>
      <FilterSwitch><input type='checkbox' role='switch' aria-label='Layer filtering' defaultChecked /></FilterSwitch>
    </LayerRowBar>
    <LayerRowBar $h={28}>
      <Picker label='Blend mode' options={['Normal', 'Multiply']} width={130} height={21} />
      <PercentLabel $w={46}>Opacity:</PercentLabel>
      <Combo label='Opacity' value='100%' width={52} />
    </LayerRowBar>
    <LayerRowBar $h={30} $pad='0 3px 2px' $last>
      <LockLabel>Lock:</LockLabel>
      <LockIcon aria-label='Lock transparency'>
        <Svg w={12}>
          <path {...line} strokeWidth='1.2' d='M.6.6h10.8v10.8H.6z' />
          <path d='M1 1h3.3v3.3H1zM7.7 1H11v3.3H7.7zM4.3 4.3h3.4v3.4H4.3zM1 7.7h3.3V11H1zM7.7 7.7H11V11H7.7z' />
        </Svg>
      </LockIcon>
      <LockIcon aria-label='Lock pixels'><Brush w={13} /></LockIcon>
      <LockIcon aria-label='Lock position'><Move w={13} /></LockIcon>
      <LockIcon aria-label='Lock artboard'>
        <Svg w={14} h={12}><path {...line} strokeWidth='1.2' d='M2.5 0v2M0 2.5h11.5V12M2.5 4v6.5H14M9 1.5l3-1.500' /></Svg>
      </LockIcon>
      <LockIcon aria-label='Lock all'>
        <Svg w={10} h={12}><path d='M0 5h10v7H0z' /><path {...line} strokeWidth='1.5' d='M2.3 5V3.2C2.3.1 7.7.1 7.7 3.2V5' /><path d='M4.4 7.5h1.2v2H4.4z' fill='#323232' /></Svg>
      </LockIcon>
      <PercentLabel $w={36}>Fill:</PercentLabel>
      <Combo label='Fill' value='100%' width={52} />
    </LayerRowBar>
    <LayerList>
      {layers.map(l => (
        <LayerItem key={l.name}>
          <EyeButton aria-label={`Toggle ${l.name}`}>
            <Svg w={13} h={9}>
              <path fillRule='evenodd' d='M0 4.5C2 1.5 4 0 6.5 0S11 1.5 13 4.5C11 7.5 9 9 6.5 9S2 7.5 0 4.5zM6.5 1.2a3.3 3.3 0 1 0 0 6.6 3.3 3.3 0 0 0 0-6.6z' />
              <circle cx='6.5' cy='4.5' r='2' />
            </Svg>
          </EyeButton>
          <LayerMain $active={l.active}>
            <ThumbFrame $active={l.active}><Thumb $clear={l.active} /></ThumbFrame>
            {l.name}
          </LayerMain>
        </LayerItem>
      ))}
    </LayerList>
    <LayersFooter>
      <FootButton $dim aria-label='Link layers'>
        <Svg w={14} h={7}><path {...line} strokeWidth='1.3' d='M6 .7H3.500a2.800 2.800 0 0 0 0 5.600H6M8 .7h2.500a2.800 2.800 0 0 1 0 5.600H8M4.500 3.500h5' /></Svg>
      </FootButton>
      <FootButton $drop aria-label='Layer style'><Fx>fx</Fx></FootButton>
      <FootButton aria-label='Add mask'>
        <Svg w={13} h={10}><path fillRule='evenodd' d='M0 0h13v10H0zM6.5 2a3 3 0 1 0 0 6 3 3 0 0 0 0-6z' /></Svg>
      </FootButton>
      <FootButton $on $drop aria-label='Adjustment layer'>
        <Svg w={12}><circle {...line} cx='6' cy='6' r='5.3' /><path d='M10 2A5.500 5.500 0 0 1 2 10z' /></Svg>
      </FootButton>
      <FootButton aria-label='New group'>
        <Svg w={12} h={10}><path d='M0 0h5l1 2h6v8H0z' /></Svg>
      </FootButton>
      <FootButton $bar aria-label='New layer'>
        <Svg w={11} h={12}><path {...line} strokeWidth='1.3' d='M.6.6h9.8v10.8H.6zM5.5 3v6M2.5 6h6' /></Svg>
      </FootButton>
      <FootButton aria-label='Delete layer'>
        <Svg w={10} h={13}><path {...line} strokeWidth='1.2' d='M0 2.5h10M1.2 2.5v9.9h7.6V2.5M3.7 4.5v6M6.3 4.5v6M3.5 2V.6h3V2' /></Svg>
      </FootButton>
    </LayersFooter>
    <ResizeStrip><Grip $flat /></ResizeStrip>
    <AdjustMenu role='menu'>
      {adjustments.map((group, i) => (
        <AdjustGroup key={i}>
          {group.map((label, j) => <AdjustItem key={j} role='menuitem'>{label}</AdjustItem>)}
        </AdjustGroup>
      ))}
    </AdjustMenu>
  </LayersWrapper>
)

const dockGroups = [
  [
    ['Brushes', (
      <Svg w={21} h={17}>
        <path d='M0 0h2v2H0zM3.5 0H8v1.5H3.5zM0 3h2v2H0zM3.5 3.3H7v1.5H3.5zM0 6h2v2H0zM3.5 6.3H7v1.5H3.5z' />
        <path d='M21 2c-.4 1.5-4 6-6.5 8l-2-1.8C14.5 6 19 2.5 21 2zM11.5 9.2l2.2 2c.3 3-3.5 5.2-8.7 4.8 2.5-1 2-3 3-5 .7-1.4 2.2-2 3.5-1.8z' />
      </Svg>
    ), 27],
    ['Brush settings', (
      <Svg w={20} h={16}>
        <path d='M0 3c2 0 2.5-2.5 5-2.5S8.5 2 8.5 3 7.5 5.5 5 5.5 1 4.5 0 3zM9.5 2.2H20v1.6H9.5zM2 10.2h9v1.6H2zM12 11c1-2.5 5-4.5 8-4.5V15.5c-3 0-7-2-8-4.5z' />
      </Svg>
    ), 27],
  ],
  [
    ['Character', <CharA key='a' $caret>A</CharA>, 24, true],
    ['Paragraph', <CharA key='p'>¶</CharA>, 33],
  ],
  [['Tool presets', (
    <Svg w={18}>
      <path d='M1 2l2 2 2-.5.5-2L4.5.3C7 0 9 2 8 4.8l2 2-2.2 2.2-2.2-2.2C3.5 7.5.5 6 1 2zM16.5.5L18 2l-5 6-6.5 8.5c-1 1.5-3.5 1.3-4.2.5s-.8-2 0-3L9.5 7.5z' />
      <path {...line} strokeWidth='1.6' d='M10 10l3 3' />
      <circle {...line} strokeWidth='1.6' cx='14.8' cy='14.2' r='2.3' />
    </Svg>
  ), 30]],
  [['Libraries', (
    <Svg w={16}>
      <path {...line} strokeWidth='1.2' d='M3.6.6h11.8v12.3H3.6zM3 2.6H.6v12.8h12.3V13' />
      <path d='M8.5 2.5h4V9l-2-1.8-2 1.8z' />
    </Svg>
  ), 30]],
  [['Plugins', <Svg key='b' w={12} h={10}><path d='M1.5 0h3v2.5h3V0h3v2.5H12V10H0V2.5h1.5z' /></Svg>, 30]],
  [['Zii', <Big2 key='2'>2</Big2>, 30]],
]

const RightDock = () => (
  <DockWrapper>
    <DockHead><IconButton aria-label='Collapse dock'><Double dir='left' /></IconButton></DockHead>
    {dockGroups.map((g, i) => (
      <DockGroup key={i}>
        <Grip />
        {g.map(([n, icon, h, on]) => <DockButton key={n} $h={h} $on={on} aria-label={n}>{icon}</DockButton>)}
      </DockGroup>
    ))}
  </DockWrapper>
)

const Taskbar = () => (
  <TaskbarWrapper>
    <Widgets aria-label='Widgets'>
      <Svg w={24} h={22}>
        <rect width='24' height='22' rx='1.5' fill='#155a9c' />
        <path d='M2 2h9v18H2z' fill='#f2f4f6' />
        <path d='M13 2h9v10h-9z' fill='#6cd4fb' />
        <path d='M13 12h9v4h-9z' fill='#1ea0f0' />
        <path d='M13 16h9v4h-9z' fill='#0b7fdc' />
      </Svg>
    </Widgets>
    <AppList>
      {apps.map(a => (
        <AppButton key={a.name} $active={a.active || a.alert} aria-label={a.name}>
          {a.icon}
          {a.open && <Running $active={a.active} $alert={a.alert} />}
        </AppButton>
      ))}
    </AppList>
    <Tray>
      <TrayButton aria-label='Hidden icons'>
        <Svg w={13} h={8}><path {...line} strokeWidth='1.4' d='M1 7l5.5-5.5L12 7' /></Svg>
      </TrayButton>
      {tray.map(([n, icon]) => <TrayButton key={n} aria-label={n}>{icon}</TrayButton>)}
      <Lang>ENG<br />US</Lang>
      <TrayButton $w={26} aria-label='Network'>
        <Svg w={17} h={16}><path {...line} strokeWidth='1.2' d='M10 2.6H1v9.5h12.5V7M5 15.3h7M7 12v3M11.5.6h4v5h-4zM13.5 6v9' /></Svg>
      </TrayButton>
      <TrayButton $w={26} aria-label='Volume'>
        <Svg w={15}>
          <path {...line} strokeWidth='1.2' d='M1 5h2.5L7 1.5v9L3.5 8H1z' />
          <circle cx='10' cy='10' r='4.7' fill='#f0f0f0' />
          <path d='M8 8l4 4M12 8l-4 4' stroke='#222' strokeWidth='1.2' />
        </Svg>
      </TrayButton>
      <Clock>12:21 PM<br />8/9/2022</Clock>
      <TrayButton $w={32} aria-label='Focus assist'>
        <Svg w={14}><path {...line} strokeWidth='1.3' d='M7 .8A6.2 6.2 0 1 1 1 10.5C5.5 10.5 8 7 7 .8z' /></Svg>
      </TrayButton>
    </Tray>
  </TaskbarWrapper>
)

const menus = ['File', 'Edit', 'Image', 'Layer', 'Type', 'Select', 'Filter', '3D', 'View', 'Plugins', 'Window', 'Help']

const docs = [
  { name: '22618_IBank_Generic Web Banner.psd @ 90.8% (Vector Smart Object, RGB/8) *', width: 444 },
  { name: '22606_IBank_Yamaha Standee.psd @ 25% (RGB/8)', width: 298 },
  { name: 'Untitled-1 @ 66.7% (Layer 1, RGB/8) *', width: 232, active: true },
]

const adjustments = [
  Array(3).fill('Solid Color...'),
  Array(4).fill('Solid Color...'),
  Array(7).fill('Solid Color...'),
  ['Invert', 'Posterize...', 'Threshold...', 'Gradient Map...', 'Selective Color...'],
]

const layers = [
  { name: 'Layer 1', active: true },
  { name: 'Layer 0' },
]

// inches along the top and left edges, 48px apart
const hMarks = ['', 4, 3, 2, 1, ...Array.from({ length: 34 }, (_, i) => i)]
const vMarks = [...Array(11).fill(''), 8, 9, 10, 11, 12, 13, 14, 15]

const App = memo(() => (
  <>
    <GlobalStyle />
    <Page>
      <MenuBar />
      <OptionsBar />
      <Workspace>
        <DocumentColumn>
          <DocTabs>
            {docs.map(d => (
              <DocTab key={d.name} $w={d.width} $active={d.active}>
                <span>{d.name}</span>
                <IconButton aria-label='Close document'><Cross /></IconButton>
              </DocTab>
            ))}
          </DocTabs>
          <DocGrid>
            <TopRuler>
              {hMarks.map((m, i) => <TopMark key={i}>{m}</TopMark>)}
            </TopRuler>
            <VScroll>
              <Chevron dir='up' w={9} />
              <VThumb />
              <Chevron w={9} />
            </VScroll>
            <Stage>
              <SideRuler>
                {vMarks.map((m, i) => <SideMark key={i}>{String(m).split('').map((c, j) => <span key={j}>{c}</span>)}</SideMark>)}
              </SideRuler>
              <Artboard />
            </Stage>
          </DocGrid>
          <StatusBar>
            <ZoomInput aria-label='Zoom level' defaultValue='66.67%' />
            <DocInfo>
              22.222 in x 12.5 in (72 ppi)
              <Chevron dir='right' w={10} />
            </DocInfo>
            <HScroll>
              <Chevron dir='left' w={9} />
              <HThumb />
              <Chevron dir='right' w={9} />
            </HScroll>
          </StatusBar>
        </DocumentColumn>
        <RightDock />
        <Toolbox />
        <MiniPanel>
          <PanelHead $h={13}>
            <IconButton aria-label='Expand'><Double /></IconButton>
            <IconButton aria-label='Close panel'><Cross bold /></IconButton>
          </PanelHead>
          <Grip />
          <DockButton $h={28} aria-label='Clone source'>
            <Svg w={20} h={16}>
              <path d='M0 0h1.5v1.5H0zM3 0h4v1.5H3zM0 3h1.5v1.5H0zM3 3h4v1.5H3zM0 6h1.5v1.5H0zM3 6h4v1.5H3z' />
              <path d='M13 0a3 3 0 0 1 3 3c0 1.5-1.3 2.5-1.3 4.5 0 1 .6 1.5 2 1.5h1.5c1 0 1.3.5 1.3 1.5v2h-13v-2c0-1 .3-1.5 1.3-1.5h1.5c1.4 0 2-.5 2-1.5C11.3 5.5 10 4.5 10 3a3 3 0 0 1 3-3zM7.5 14h11v1.5h-11z' />
            </Svg>
          </DockButton>
          <DockButton $h={28} aria-label='Properties'>
            <Svg w={17} h={15}>
              <path {...line} strokeWidth='1.2' d='M0 2.5h3M7 2.5h10M0 7.5h9M13 7.5h4M0 12.5h4M8 12.5h9' />
              <circle {...line} strokeWidth='1.2' cx='5' cy='2.5' r='1.9' />
              <circle {...line} strokeWidth='1.2' cx='11' cy='7.5' r='1.9' />
              <circle {...line} strokeWidth='1.2' cx='6' cy='12.5' r='1.9' />
            </Svg>
          </DockButton>
        </MiniPanel>
        <CharacterPanel />
        <LayersPanel />
      </Workspace>
      <Taskbar />
    </Page>
  </>
))

export default App
